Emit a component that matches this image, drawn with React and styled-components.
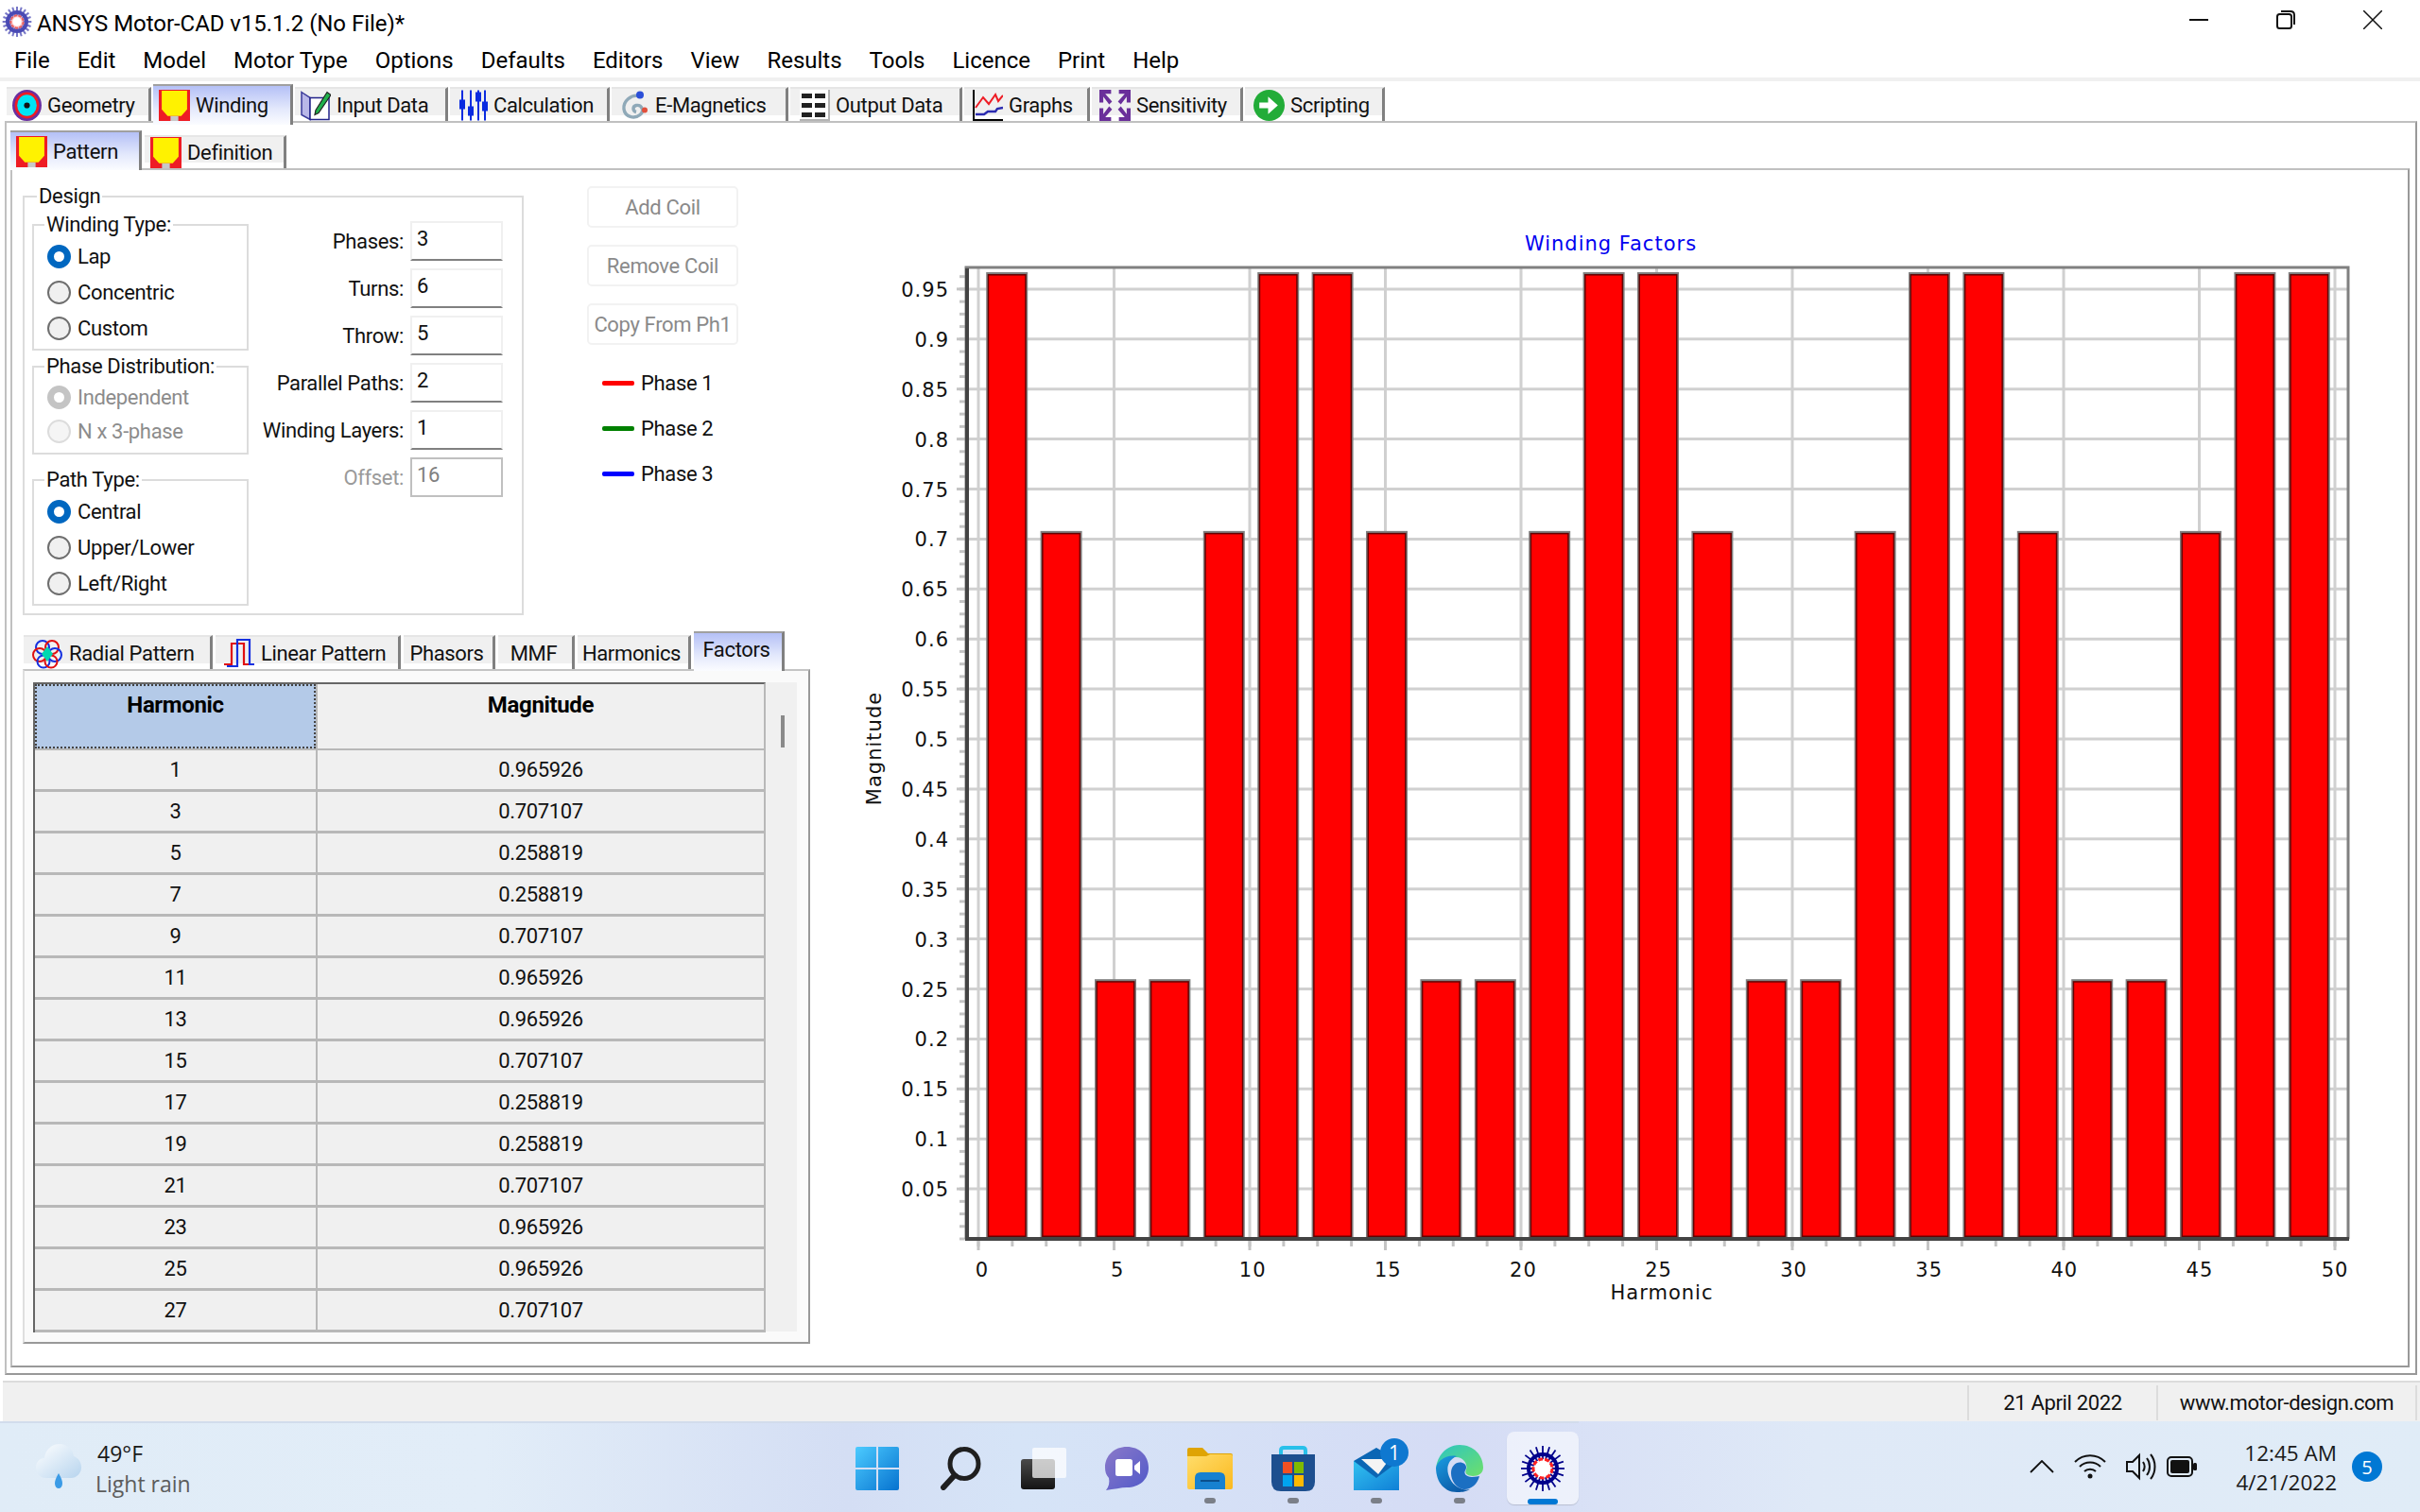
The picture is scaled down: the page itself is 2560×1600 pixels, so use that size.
import React from "react";
import styled, { createGlobalStyle } from "styled-components";

const Global = createGlobalStyle`
  html, body { margin: 0; padding: 0; background: #fff; }
  #root { width: 2560px; height: 1600px; }
  * { box-sizing: border-box; }
`;

const UI = `"Roboto", "Liberation Sans", sans-serif`;
const CHART = `"DejaVu Sans", sans-serif`;

const Root = styled.div`
  width: 2560px; height: 1600px; display: flex; flex-direction: column; overflow: hidden;
  background: #fff; font-family: ${UI}; font-size: 22px; color: #000; letter-spacing: -0.35px;
`;
const TitleBar = styled.div`height: 46px; display: flex; align-items: center; padding-left: 2px; flex: none;`;
const TitleText = styled.div`margin-left: 5px; font-size: 24px; letter-spacing: -0.05px; margin-top: 3px;`;
const WinControls = styled.div`margin-left: auto; display: flex; padding-right: 4px; margin-top: -4px;`;
const WinButton = styled.div`width: 92px; height: 40px; display: flex; align-items: center; justify-content: center;`;
const MenuBar = styled.div`height: 36px; display: flex; gap: 29px; padding-left: 15px; align-items: center; flex: none; font-size: 24px; letter-spacing: 0;`;
const MenuItem = styled.div`line-height: 36px;`;
const Strip = styled.div`height: 4px; background: #f0f0f0; flex: none;`;

const MainTabs = styled.div`
  height: 42px; display: flex; align-items: flex-end; padding-left: 7px; gap: 2px; flex: none; position: relative; z-index: 2;
`;
const Tab = styled.div`
  display: flex; align-items: center; gap: ${p => p.$gap ?? 6}px; width: ${p => p.$w}px; flex: none;
  height: ${p => p.$active ? p.$ah : p.$h}px;
  margin-bottom: ${p => p.$active ? -(p.$over ?? 4) : 0}px;
  padding-left: ${p => p.$pl ?? 6}px;
  padding-bottom: ${p => p.$active && p.$center ? 6 : 0}px;
  justify-content: ${p => p.$center ? "center" : "flex-start"};
  padding-right: ${p => p.$center ? 3 : 0}px;
  background: ${p => p.$active ? "linear-gradient(180deg,#b4c0f6 0%,#e4e9fc 60%,#fbfcff 100%)" : "linear-gradient(180deg,#f0f0f0 0%,#f0f0f0 82%,#fff 83%)"};
  border-right: 3px solid #808080;
  border-top: 2px solid ${p => p.$active ? "#a0a0a0" : "#e6e6e6"};
  color: #111;
  white-space: nowrap;
`;
const Frame = styled.div`
  flex: 1; margin: 0 3px 6px 5px; min-height: 0; display: flex; flex-direction: column;
  border: 2px solid #c0c0c0; border-right-color: #999; border-bottom-color: #999;
  padding: 6px 6px 6px 4px;
`;
const SubTabs = styled.div`height: 42px; display: flex; align-items: flex-end; gap: 3px; flex: none; position: relative; z-index: 2;`;
const SubFrame = styled.div`
  flex: 1; display: flex; min-height: 0;
  border: 2px solid #c0c0c0; border-right-color: #999; border-bottom-color: #999;
`;
const LeftColumn = styled.div`width: 867px; flex: none; padding: 17px 0 0 11px; display: flex; flex-direction: column;`;
const UpperRow = styled.div`display: flex; height: 456px; flex: none;`;
const Design = styled.fieldset`
  margin: 10px 0 0 0; padding: 28px 20px 0 8px; width: 530px; height: 444px; min-width: 0; flex: none;
  border: 2px solid #dcdcdc; display: flex; gap: 0;
`;
const Legend = styled.legend`
  height: 2px; line-height: 2px; padding: 0 2px; margin-left: ${p => p.$ml ?? -3}px; white-space: nowrap; color: #111;
`;
const DesignLeft = styled.div`width: 229px; flex: none; display: flex; flex-direction: column;`;
const Group = styled.fieldset`
  margin: ${p => p.$mt ?? 0}px 0 0 0; padding: 13px 0 0 14px; width: 229px; height: ${p => p.$h}px; min-width: 0;
  border: 2px solid #dcdcdc;
`;
const RadioRow = styled.div`
  height: ${p => p.$h}px; display: flex; align-items: center; gap: 7px;
  color: ${p => p.$disabled ? "#8c8c8c" : "#111"};
`;
const RadioDot = styled.span`
  width: 25px; height: 25px; border-radius: 50%; flex: none;
  background: ${p => p.$on ? "#fff" : p.$disabled ? "#f5f5f5" : "#f0f0f0"};
  border: ${p => p.$on ? "7px" : "2px"} solid ${p => p.$on ? (p.$disabled ? "#c4c4c4" : "#0067c0") : p.$disabled ? "#dcdcdc" : "#6e6e6e"};
`;
const FieldColumn = styled.div`flex: 1; display: flex; flex-direction: column; gap: 8px; margin-top: -3px;`;
const FieldRow = styled.div`display: flex; justify-content: flex-end; align-items: center; gap: 7px; height: 42px;`;
const FieldLabel = styled.span`color: ${p => p.$disabled ? "#9a9a9a" : "#111"}; white-space: nowrap; padding-top: 1px;`;
const FieldBox = styled.div`
  width: 98px; height: 42px; padding: 0 0 0 5px; line-height: 34px; flex: none;
  border: 2px solid ${p => p.$disabled ? "#c0c0c0" : "#f0f0f0"};
  border-bottom-color: ${p => p.$disabled ? "#c0c0c0" : "#808080"};
  color: ${p => p.$disabled ? "#808080" : "#111"};
`;
const ActionColumn = styled.div`margin-left: 67px; width: 160px; display: flex; flex-direction: column; gap: 18px;`;
const ActionButton = styled.div`
  height: 44px; border: 2px solid #f2f2f2; border-radius: 5px; display: flex; align-items: center; justify-content: center;
  color: #8a8a8a; white-space: nowrap;
`;
const PhaseList = styled.div`margin-top: -2px; padding-left: 16px; display: flex; flex-direction: column;`;
const PhaseRow = styled.div`height: 48px; display: flex; align-items: center; gap: 7px; color: #111;`;
const PhaseLine = styled.span`width: 34px; height: 5px; border-radius: 2px; background: ${p => p.$c};`;

const LowerTabs = styled.div`height: 41px; margin: 14px 0 0 1px; gap: 3px; flex: none; display: flex; align-items: flex-end; position: relative; z-index: 2;`;
const LowerPanel = styled.div`
  width: 833px; height: 714px; flex: none; padding: 12px 12px 0 9px; display: flex; align-items: flex-start; background: #fafafa;
  border: 2px solid #dfdfdf; border-right-color: #999; border-bottom-color: #999; border-top-color: #c4c4c4;
`;
const GridTable = styled.div`
  width: 775px; flex: none; border-top: 2px solid #666; border-left: 2px solid #666; border-right: 2px solid #b8b8b8; background: #f0f0f0;
`;
const GridRow = styled.div`
  display: grid; grid-template-columns: 297px 474px; height: ${p => p.$h ?? 44}px; border-bottom: 3px solid #b8b8b8;
`;
const Cell = styled.div`
  display: flex; align-items: center; justify-content: center; border-left: ${p => p.$first ? "0" : "2px solid #b8b8b8"}; color: #111;
`;
const HeadCell = styled.div`
  padding-top: ${p => p.$sel ? 6 : 8}px; text-align: center; font-weight: 700; line-height: 28px; font-size: 24px;
  background: ${p => p.$sel ? "#b4cae8" : "#f0f0f0"};
  border: ${p => p.$sel ? "2px dotted #444" : "0"};
  border-left: ${p => p.$sel ? "2px dotted #444" : "2px solid #b8b8b8"};
  margin-bottom: -1px;
`;
const ScrollTrack = styled.div`width: 33px; height: 687px; flex: none; background: #f0f0f0; padding: 35px 0 0 16px;`;
const ScrollThumb = styled.div`width: 4px; height: 34px; background: #8a8a8a;`;

const ChartBox = styled.div`flex: 1; padding-top: 20px; min-width: 0;`;

const StatusBar = styled.div`
  height: 43px; flex: none; background: #f0f0f0; border-top: 2px solid #dcdcdc; display: flex; justify-content: flex-end; padding: 3px 3px 1px 0; margin-left: 3px;
`;
const StatusCell = styled.div`
  width: ${p => p.$w}px; flex: none; border-left: 2px solid #dcdcdc; display: flex; align-items: center; justify-content: center; color: #111;
  &:last-child { border-right: 2px solid #dcdcdc; }
`;

const Taskbar = styled.div`
  height: 96px; flex: none; display: grid; grid-template-columns: 1fr auto 1fr; align-items: stretch;
  background: linear-gradient(90deg,#e0ecf7 0%,#e2edf8 20%,#d4def4 35%,#d6e4f7 42%,#d5dcf5 60%,#dfe9f7 75%,#e0ecf7 100%);
  font-family: "Open Sans","Noto Sans",sans-serif; letter-spacing: 0;
`;
const Weather = styled.div`display: flex; align-items: center; padding-left: 38px; gap: 15px; border-top: 2px solid #d2dcec;`;
const WeatherText = styled.div`display: flex; flex-direction: column; margin-top: 2px;`;
const WeatherTemp = styled.div`font-size: 23px; line-height: 32px; color: #1a1a1a; padding-left: 2px;`;
const WeatherDesc = styled.div`font-size: 23px; line-height: 33px; color: #5c5c5c;`;
const TaskIcons = styled.div`display: flex; gap: 12px; padding-top: 9px; border-top: 2px solid #d2dcec;`;
const TaskButton = styled.div`
  width: 76px; height: 77px; border-radius: 8px; position: relative; display: flex; align-items: center; justify-content: center;
  background: ${p => p.$active ? "rgba(255,255,255,.55)" : "transparent"};
  box-shadow: ${p => p.$active ? "0 1px 1px rgba(0,0,0,.15)" : "none"};
`;
const MailHolder = styled.div`display: flex; margin: -7px 0 0 10px;`;
const RunDot = styled.span`
  position: absolute; bottom: ${p => p.$active ? 0 : 1}px; left: 50%; transform: translateX(-50%);
  width: ${p => p.$active ? 32 : 12}px; height: 6px; border-radius: 3px; background: ${p => p.$active ? "#0078d4" : "#7b7f88"};
`;
const Tray = styled.div`display: flex; align-items: center; justify-content: flex-end; padding-right: 40px; gap: 0;`;
const TrayIcon = styled.div`width: ${p => p.$w}px; display: flex; justify-content: center; flex: none;`;
const Clock = styled.div`margin-left: 30px; text-align: right; font-size: 22.5px; line-height: 31px; color: #1a1a1a; margin-top: 2px;`;
const Badge = styled.div`
  width: 32px; height: 32px; border-radius: 50%; background: #0078d4; color: #fff; margin-left: 16px; font-size: 20px;
  display: flex; align-items: center; justify-content: center;
`;

/* ---------- icons ---------- */
const MotorIcon = ({ w = 32, h = 32, soft }) => {
  const spokes = Array.from({ length: 20 }, (_, i) => i * 18);
  const ink = soft ? "#4a4ab4" : "#00008b";
  return (
    <svg width={w} height={h} viewBox="0 0 48 50">
      {spokes.map(a => (
        <line key={a} x1="24" y1="25" x2={24 + 23 * Math.cos(a * Math.PI / 180)} y2={25 + 24 * Math.sin(a * Math.PI / 180)} stroke={ink} strokeWidth={soft ? 3 : 1.8} strokeOpacity={soft ? 0.75 : 1} />
      ))}
      <circle cx="24" cy="25" r="15" fill="none" stroke={ink} strokeWidth={soft ? 6 : 4} />
      <circle cx="24" cy="25" r="10" fill={soft ? "#ffc8c8" : "#fff"} stroke={soft ? "#e86060" : "#ff2020"} strokeWidth="3" strokeDasharray="5 2" />
      <circle cx="24" cy="25" r="7" fill="#fff" />
    </svg>
  );
};
const CoilIcon = () => (
  <svg width="33" height="33" viewBox="0 0 32 32">
    <rect width="32" height="32" fill="#ee1c25" />
    <path d="M3 1H29V20L23 27H9L3 20Z" fill="#fff200" />
    <rect x="12" y="27" width="8" height="5" fill="#c8c8c8" />
  </svg>
);
const GeometryIcon = () => (
  <svg width="31" height="33" viewBox="0 0 30 32">
    <ellipse cx="15" cy="16" rx="15" ry="16" fill="#6a2fa0" />
    <ellipse cx="15" cy="16" rx="12.5" ry="13.5" fill="#ee1c25" />
    <ellipse cx="15" cy="16" rx="10" ry="11" fill="#00e5f5" />
    <ellipse cx="15" cy="16" rx="3" ry="3" fill="#111" />
  </svg>
);
const InputIcon = () => (
  <svg width="32" height="33" viewBox="0 0 32 32">
    <path d="M1 2L10 8V31L1 26Z" fill="#b9b7e8" stroke="#3a3a9a" strokeWidth="1.5" />
    <path d="M10 8H30V31H10Z" fill="#fff" stroke="#23238a" strokeWidth="1.5" />
    <path d="M16 21L28 2L32 5L19 24L15 26Z" fill="#21b14c" stroke="#222" strokeWidth="1.2" />
  </svg>
);
const CalcIcon = () => (
  <svg width="30" height="33" viewBox="0 0 30 32" stroke="#0a2be0" strokeWidth="2">
    <line x1="3" y1="0" x2="3" y2="32" /><line x1="12" y1="0" x2="12" y2="32" /><line x1="20" y1="0" x2="20" y2="32" /><line x1="27" y1="0" x2="27" y2="32" />
    <rect x="1" y="11" width="4" height="8" fill="#0a2be0" /><rect x="10" y="18" width="4" height="8" fill="#0a2be0" /><rect x="18" y="3" width="4" height="8" fill="#0a2be0" /><rect x="25" y="13" width="4" height="8" fill="#0a2be0" />
  </svg>
);
const MagneticsIcon = () => (
  <svg width="30" height="33" viewBox="0 0 30 32">
    <path d="M20 6C10 4 2 12 3 20C4 28 14 31 20 26C25 22 22 15 16 16C12 17 12 22 16 23" fill="none" stroke="#8fa9b8" strokeWidth="3.4" />
    <circle cx="20" cy="5" r="4" fill="#2b4fd8" /><circle cx="25" cy="21" r="3" fill="#e2503c" />
  </svg>
);
const OutputIcon = () => (
  <svg width="32" height="33" viewBox="0 0 32 33">
    <rect width="32" height="33" fill="#fff" /><path d="M30 0V31H0V33H32V0Z" fill="#b4b4b4" />
    {[4, 14, 24].map(y => (<g key={y}><rect x="2" y={y} width="11" height="5" fill="#222" /><rect x="16" y={y} width="11" height="5" fill="#222" /></g>))}
  </svg>
);
const GraphsIcon = () => (
  <svg width="32" height="33" viewBox="0 0 32 33" fill="none">
    <path d="M1 0V32H32" stroke="#000" strokeWidth="2" />
    <path d="M3 19L11 8L17 15L24 5L27 12L32 6" stroke="#ee1c25" strokeWidth="2" />
    <path d="M3 26H12L16 23H24L26 20L32 19" stroke="#2b2bb0" strokeWidth="2.4" />
  </svg>
);
const SensitivityIcon = () => (
  <svg width="33" height="33" viewBox="0 0 32 32" fill="#6a2f9a">
    <path d="M0 0H12V4H6L13 12L10 15L4 7V13H0Z" /><path d="M32 0H20V4H26L19 12L22 15L28 7V13H32Z" />
    <path d="M0 32H12V28H6L13 20L10 17L4 25V19H0Z" /><path d="M32 32H20V28H26L19 20L22 17L28 25V19H32Z" />
  </svg>
);
const ScriptIcon = () => (
  <svg width="33" height="33" viewBox="0 0 32 32">
    <circle cx="16" cy="16" r="16" fill="#22ac38" />
    <path d="M6 13H15V7L25 16L15 25V19H6Z" fill="#fff" />
  </svg>
);
const RadialIcon = () => (
  <svg width="32" height="33" viewBox="0 0 32 33" fill="none" strokeWidth="2">
    <circle cx="11" cy="10" r="7" stroke="#1530e0" /><circle cx="21" cy="10" r="7" stroke="#e01010" />
    <circle cx="8" cy="18" r="7" stroke="#e01010" /><circle cx="24" cy="18" r="7" stroke="#1530e0" />
    <circle cx="12" cy="25" r="6.5" stroke="#1530e0" /><circle cx="20" cy="25" r="6.5" stroke="#e01010" />
    <path d="M16 9L22 17L16 25L10 17Z" fill="#00d8b0" />
  </svg>
);
const LinearIcon = () => (
  <svg width="32" height="30" viewBox="0 0 32 30" fill="none" strokeWidth="2.2">
    <path d="M0 27H8V5H21V27H32" stroke="#e01010" /><path d="M3 29H14V1H27V27H32" stroke="#1530e0" />
  </svg>
);
const StartIcon = () => (
  <svg width="46" height="46" viewBox="0 0 46 46">
    <defs><linearGradient id="st" x1="0" y1="0" x2="1" y2="1"><stop offset="0" stopColor="#4ccbff" /><stop offset="1" stopColor="#0672cf" /></linearGradient></defs>
    <path d="M2 0H22V22H0V2Q0 0 2 0ZM24 0H44Q46 0 46 2V22H24ZM0 24H22V46H2Q0 46 0 44ZM24 24H46V44Q46 46 44 46H24Z" fill="url(#st)" />
  </svg>
);
const SearchIcon = () => (
  <svg width="44" height="46" viewBox="0 0 44 46" fill="none" stroke="#1f1f1f" strokeLinecap="round">
    <ellipse cx="26" cy="18" rx="15" ry="15.5" strokeWidth="5" /><path d="M15 31L4 43" strokeWidth="6" />
  </svg>
);
const TaskViewIcon = () => (
  <svg width="48" height="44" viewBox="0 0 48 44">
    <defs><linearGradient id="tv" x1="0" y1="0" x2="0" y2="1"><stop offset="0" stopColor="#4a4a4a" /><stop offset="1" stopColor="#141414" /></linearGradient></defs>
    <rect x="0" y="12" width="36" height="32" rx="3" fill="url(#tv)" />
    <rect x="12" y="0" width="36" height="32" rx="2" fill="#fff" fillOpacity=".72" />
  </svg>
);
const ChatIcon = () => (
  <svg width="46" height="46" viewBox="0 0 46 46">
    <defs><linearGradient id="ch" x1="0" y1="0" x2="1" y2="1"><stop offset="0" stopColor="#8b79c9" /><stop offset="1" stopColor="#5059c9" /></linearGradient></defs>
    <path d="M23 0C36 0 46 9 46 22C46 35 36 43 23 43C17 43 9 45 1 46C4 42 5 38 4 33C1 30 0 26 0 22C0 9 10 0 23 0Z" fill="url(#ch)" />
    <rect x="11" y="13" width="18" height="18" rx="2.5" fill="#fff" /><path d="M31 20L37 15V29L31 24Z" fill="#fff" />
  </svg>
);
const FolderIcon = () => (
  <svg width="48" height="44" viewBox="0 0 48 44">
    <defs><linearGradient id="fo" x1="0" y1="0" x2="1" y2="1"><stop offset="0" stopColor="#ffdd6b" /><stop offset="1" stopColor="#fbb91f" /></linearGradient></defs>
    <path d="M0 2Q0 0 2 0H16L22 6H46Q48 6 48 8V20H0Z" fill="#dfa404" />
    <path d="M0 9H20L24 7H46Q48 7 48 9V42Q48 44 46 44H2Q0 44 0 42Z" fill="url(#fo)" />
    <path d="M8 44V32Q8 26 14 26H34Q40 26 40 32V44Z" fill="#1781d0" /><rect x="14" y="34" width="20" height="2" fill="#0a4f8c" />
  </svg>
);
const StoreIcon = () => (
  <svg width="46" height="48" viewBox="0 0 46 48">
    <path d="M10 12V5Q10 2 13 2H33Q36 2 36 5V12" fill="none" stroke="#29c0ea" strokeWidth="4" />
    <path d="M0 9H46V38Q46 48 36 48H10Q0 48 0 38Z" fill="#1d4f8f" />
    <rect x="12" y="17" width="10" height="12" fill="#f25022" /><rect x="24" y="17" width="10" height="12" fill="#7fba00" />
    <rect x="12" y="31" width="10" height="12" fill="#00a4ef" /><rect x="24" y="31" width="10" height="12" fill="#ffb900" />
  </svg>
);
const MailIcon = () => (
  <svg width="58" height="56" viewBox="0 0 58 56">
    <defs><linearGradient id="ma" x1="0" y1="0" x2="1" y2="1"><stop offset="0" stopColor="#33c1f0" /><stop offset="1" stopColor="#0f7fd6" /></linearGradient></defs>
    <path d="M0 24L24 10L48 24V55H0Z" fill="#0b66b4" />
    <path d="M8 22H38L26 38Z" fill="#f4f4f4" />
    <path d="M0 24L24 42L48 24V55H0Z" fill="url(#ma)" />
    <circle cx="43" cy="15" r="15" fill="#0f78d0" />
    <text x="43" y="23" fontSize="21" fill="#fff" textAnchor="middle" fontFamily="Open Sans, sans-serif">1</text>
  </svg>
);
const EdgeIcon = () => (
  <svg width="50" height="50" viewBox="0 0 50 50">
    <defs>
      <linearGradient id="e1" x1="0" y1="0" x2="1" y2="1"><stop offset="0" stopColor="#2bc4c4" /><stop offset="1" stopColor="#6ee06a" /></linearGradient>
      <linearGradient id="e2" x1="0" y1="0" x2="0.6" y2="1"><stop offset="0" stopColor="#1b9de2" /><stop offset="1" stopColor="#0c5ba8" /></linearGradient>
    </defs>
    <path d="M25 0C40 0 50 11 50 24C50 30 45 33 39 33C33 33 30 30 32 26C34 22 30 12 20 13C10 14 2 20 0 24C2 10 12 0 25 0Z" fill="url(#e1)" />
    <path d="M0 24C2 16 12 10 22 12C12 16 10 26 15 36C19 44 28 49 36 47C31 50 26 50 22 50C8 50 0 38 0 24Z" fill="url(#e2)" />
    <path d="M16 30C16 22 22 17 28 19C32 20 33 24 31 27C29 30 32 34 38 34C42 34 45 33 46 33C44 42 36 48 29 47C22 46 16 38 16 30Z" fill="#1b6fc2" />
  </svg>
);
const CloudIcon = () => (
  <svg width="48" height="54" viewBox="0 0 48 54">
    <defs><linearGradient id="cl" x1="0" y1="0" x2="1" y2="1"><stop offset="0" stopColor="#fff" /><stop offset="1" stopColor="#b7d4ee" /></linearGradient></defs>
    <path d="M11 38C4 38 0 33 0 27C0 21 4 17 9 17C10 8 17 2 25 2C33 2 39 8 40 15C45 17 48 21 48 27C48 33 43 38 37 38Z" fill="url(#cl)" />
    <path d="M24 33C27 38 28 41 28 44C28 47 26 49 24 49C22 49 20 47 20 44C20 41 21 38 24 33Z" fill="#3b9be6" />
  </svg>
);

const RestoreIcon = () => (
  <svg width="20" height="20" viewBox="0 0 20 20" fill="none" stroke="#111" strokeWidth="2">
    <rect x="1" y="4" width="15" height="15" rx="2.5" /><path d="M5 1H15Q19 1 19 5V15" />
  </svg>
);

/* ---------- chart ---------- */
const X0 = 1035, XS = 28.7, Y0 = 1311, YS = 1058, PL = 1023, PT = 284, PR = 2484;
const px = v => X0 + v * XS;
const py = v => Y0 - v * YS;
const chartFont = { fontFamily: CHART, fontSize: 21, letterSpacing: 1, fill: "#111" };
const factors = [0.965926, 0.707107, 0.258819, 0.258819, 0.707107, 0.965926];
const bars = Array.from({ length: 25 }, (_, i) => ({ h: 2 * i + 1, v: factors[i % 6] }));
const yMajor = Array.from({ length: 19 }, (_, i) => (i + 1) * 0.05);
const xMajor = Array.from({ length: 11 }, (_, i) => i * 5);
const yMinor = Array.from({ length: 80 }, (_, i) => i * 0.0125).filter(v => py(v) > PT + 4);
const xMinor = Array.from({ length: 41 }, (_, i) => i * 1.25);
const fmt = v => String(Number(v.toFixed(2)));

const Chart = () => (
  <svg width="1660" height="1220" viewBox="880 200 1660 1220" style={{ display: "block" }}>
    <text x="1704" y="265" textAnchor="middle" {...chartFont} fill="#0000f0">Winding Factors</text>
    {xMajor.map(v => <line key={v} x1={px(v)} x2={px(v)} y1={PT} y2={Y0} stroke="#d0d0d0" strokeWidth="3" />)}
    {yMajor.map(v => <line key={v} x1={PL} x2={PR} y1={py(v)} y2={py(v)} stroke="#d0d0d0" strokeWidth="3" />)}
    {yMinor.map(v => <line key={v} x1="1015" x2={PL} y1={py(v)} y2={py(v)} stroke="#c4c4c4" strokeWidth="3" />)}
    {yMajor.map(v => <line key={v} x1="1012" x2={PL} y1={py(v)} y2={py(v)} stroke="#c4c4c4" strokeWidth="3" />)}
    {xMinor.map(v => <line key={v} x1={px(v)} x2={px(v)} y1={Y0} y2="1319" stroke="#c4c4c4" strokeWidth="3" />)}
    {xMajor.map(v => <line key={v} x1={px(v)} x2={px(v)} y1={Y0} y2="1323" stroke="#c4c4c4" strokeWidth="3" />)}
    {bars.map(b => {
      const c = px(b.h) + 1.5;
      return (
        <g key={b.h}>
          <rect x={c - 22} y={py(b.v) - 1} width="44" height={Y0 - py(b.v) + 1} fill="#808080" />
          <rect x={c - 20.5} y={py(b.v) + 1} width="41" height={Y0 - py(b.v)} fill="#660000" />
          <rect x={c - 19} y={py(b.v) + 2.5} width="38" height={Y0 - py(b.v) - 6} fill="#ff0000" />
        </g>
      );
    })}
    <path d={`M${PL - 1} ${Y0}V${PT - 1}H${PR}V${Y0}`} fill="none" stroke="#808080" strokeWidth="3" />
    <line x1="1023" x2="1023" y1="284" y2="1313" stroke="#444" strokeWidth="4" />
    <line x1="1021" x2={PR + 1} y1="1311" y2="1311" stroke="#444" strokeWidth="4" />
    {yMajor.map(v => <text key={v} x="1004" y={py(v) + 8} textAnchor="end" {...chartFont}>{fmt(v)}</text>)}
    {xMajor.map(v => <text key={v} x={1039 + v * 28.62} y="1351" textAnchor="middle" {...chartFont}>{v}</text>)}
    <text x="1758" y="1375" textAnchor="middle" {...chartFont}>Harmonic</text>
    <text transform="translate(932 792) rotate(-90)" textAnchor="middle" {...chartFont}>Magnitude</text>
  </svg>
);

/* ---------- data ---------- */
const menus = ["File", "Edit", "Model", "Motor Type", "Options", "Defaults", "Editors", "View", "Results", "Tools", "Licence", "Print", "Help"];
const mainTabs = [
  { t: "Geometry", w: 153, I: GeometryIcon, pl: 6 },
  { t: "Winding", w: 148, I: CoilIcon, active: true, pl: 6 },
  { t: "Input Data", w: 162, I: InputIcon, pl: 6 },
  { t: "Calculation", w: 169, I: CalcIcon, pl: 10 },
  { t: "E-Magnetics", w: 187, I: MagneticsIcon, pl: 10 },
  { t: "Output Data", w: 182, I: OutputIcon, pl: 10 },
  { t: "Graphs", w: 133, I: GraphsIcon, pl: 9 },
  { t: "Sensitivity", w: 160, I: SensitivityIcon, pl: 8 },
  { t: "Scripting", w: 148, I: ScriptIcon, pl: 9 },
];
const lowerTabs = [
  { t: "Radial Pattern", w: 200, I: RadialIcon },
  { t: "Linear Pattern", w: 196, I: LinearIcon },
  { t: "Phasors", w: 97, c: true },
  { t: "MMF", w: 81, c: true },
  { t: "Harmonics", w: 120, c: true },
  { t: "Factors", w: 96, c: true, active: true },
];
const rows = Array.from({ length: 14 }, (_, i) => ({ h: 2 * i + 1, v: factors[i % 6].toFixed(6) }));
const fields = [["Phases:", "3"], ["Turns:", "6"], ["Throw:", "5"], ["Parallel Paths:", "2"], ["Winding Layers:", "1"], ["Offset:", "16", true]];

const Radio = ({ h, on, disabled, children }) => (
  <RadioRow $h={h} $disabled={disabled}>
    <RadioDot $on={on} $disabled={disabled} />{children}
  </RadioRow>
);

export default function App() {
  return (
    <Root>
      <Global />
      <TitleBar>
        <MotorIcon w={32} h={36} soft />
        <TitleText>ANSYS Motor-CAD v15.1.2 (No File)*</TitleText>
        <WinControls>
          <WinButton><svg width="20" height="20" viewBox="0 0 20 20"><rect y="9" width="20" height="2" fill="#111" /></svg></WinButton>
          <WinButton><RestoreIcon /></WinButton>
          <WinButton><svg width="20" height="20" viewBox="0 0 20 20" stroke="#111" strokeWidth="1.5"><path d="M0 0L20 20M20 0L0 20" /></svg></WinButton>
        </WinControls>
      </TitleBar>
      <MenuBar>{menus.map(m => <MenuItem key={m}>{m}</MenuItem>)}</MenuBar>
      <Strip />
      <MainTabs>
        {mainTabs.map(({ t, w, I, active, pl }) => (
          <Tab key={t} $w={w} $h={36} $ah={43} $active={active} $pl={pl}><I />{t}</Tab>
        ))}
      </MainTabs>
      <Frame>
        <SubTabs>
          <Tab $w={139} $h={35} $ah={42} $over={2} $active><CoilIcon />Pattern</Tab>
          <Tab $w={150} $h={35} $ah={42}><CoilIcon />Definition</Tab>
        </SubTabs>
        <SubFrame>
          <LeftColumn>
            <UpperRow>
              <Design>
                <Legend $ml={5}>Design</Legend>
                <DesignLeft>
                  <Group $h={134}>
                    <Legend>Winding Type:</Legend>
                    <Radio h={38} on>Lap</Radio>
                    <Radio h={38}>Concentric</Radio>
                    <Radio h={38}>Custom</Radio>
                  </Group>
                  <Group $h={94} $mt={16}>
                    <Legend>Phase Distribution:</Legend>
                    <Radio h={36} on disabled>Independent</Radio>
                    <Radio h={36} disabled>N x 3-phase</Radio>
                  </Group>
                  <Group $h={134} $mt={26}>
                    <Legend>Path Type:</Legend>
                    <Radio h={38} on>Central</Radio>
                    <Radio h={38}>Upper/Lower</Radio>
                    <Radio h={38}>Left/Right</Radio>
                  </Group>
                </DesignLeft>
                <FieldColumn>
                  {fields.map(([l, v, d]) => (
                    <FieldRow key={l}>
                      <FieldLabel $disabled={d}>{l}</FieldLabel>
                      <FieldBox $disabled={d}>{v}</FieldBox>
                    </FieldRow>
                  ))}
                </FieldColumn>
              </Design>
              <ActionColumn>
                <ActionButton>Add Coil</ActionButton>
                <ActionButton>Remove Coil</ActionButton>
                <ActionButton>Copy From Ph1</ActionButton>
                <PhaseList>
                  <PhaseRow><PhaseLine $c="#ff0000" />Phase 1</PhaseRow>
                  <PhaseRow><PhaseLine $c="#008000" />Phase 2</PhaseRow>
                  <PhaseRow><PhaseLine $c="#0000ff" />Phase 3</PhaseRow>
                </PhaseList>
              </ActionColumn>
            </UpperRow>
            <LowerTabs>
              {lowerTabs.map(({ t, w, I, c, active }) => (
                <Tab key={t} $w={w} $h={36} $ah={42} $over={2} $active={active} $center={c} $gap={7} $pl={c ? 0 : 9}>
                  {I && <I />}{t}
                </Tab>
              ))}
            </LowerTabs>
            <LowerPanel>
              <GridTable>
                <GridRow $h={70}>
                  <HeadCell $sel>Harmonic</HeadCell>
                  <HeadCell>Magnitude</HeadCell>
                </GridRow>
                {rows.map(r => (
                  <GridRow key={r.h}>
                    <Cell $first>{r.h}</Cell>
                    <Cell>{r.v}</Cell>
                  </GridRow>
                ))}
              </GridTable>
              <ScrollTrack><ScrollThumb /></ScrollTrack>
            </LowerPanel>
          </LeftColumn>
          <ChartBox><Chart /></ChartBox>
        </SubFrame>
      </Frame>
      <StatusBar>
        <StatusCell $w={200}>21 April 2022</StatusCell>
        <StatusCell $w={276}>www.motor-design.com</StatusCell>
      </StatusBar>
      <Taskbar>
        <Weather>
          <CloudIcon />
          <WeatherText>
            <WeatherTemp>49°F</WeatherTemp>
            <WeatherDesc>Light rain</WeatherDesc>
          </WeatherText>
        </Weather>
        <TaskIcons>
          <TaskButton><StartIcon /></TaskButton>
          <TaskButton><SearchIcon /></TaskButton>
          <TaskButton><TaskViewIcon /></TaskButton>
          <TaskButton><ChatIcon /></TaskButton>
          <TaskButton><FolderIcon /><RunDot /></TaskButton>
          <TaskButton><StoreIcon /><RunDot /></TaskButton>
          <TaskButton><MailHolder><MailIcon /></MailHolder><RunDot /></TaskButton>
          <TaskButton><EdgeIcon /><RunDot /></TaskButton>
          <TaskButton $active><MotorIcon w={48} h={50} /><RunDot $active /></TaskButton>
        </TaskIcons>
        <Tray>
          <TrayIcon $w={26}><svg width="26" height="14" viewBox="0 0 26 14" fill="none" stroke="#111" strokeWidth="1.8"><path d="M1 13L13 1L25 13" /></svg></TrayIcon>
          <TrayIcon $w={76}>
            <svg width="34" height="28" viewBox="0 0 34 28" fill="none" stroke="#111" strokeWidth="2">
              <path d="M1 9C10 0 24 0 33 9M6 14C12 8 22 8 28 14M11 19C14 16 20 16 23 19" /><circle cx="17" cy="24" r="2.5" fill="#111" stroke="none" />
            </svg>
          </TrayIcon>
          <TrayIcon $w={32}>
            <svg width="32" height="30" viewBox="0 0 32 30" fill="none" stroke="#111" strokeWidth="2">
              <path d="M1 10H7L14 3V27L7 20H1Z" /><path d="M18 10C20 13 20 17 18 20M22 6C26 11 26 19 22 24M26 2C32 9 32 21 26 28" />
            </svg>
          </TrayIcon>
          <TrayIcon $w={54}>
            <svg width="32" height="22" viewBox="0 0 32 22">
              <rect x="1" y="1" width="26" height="20" rx="4" fill="none" stroke="#111" strokeWidth="2" /><rect x="4" y="4" width="20" height="14" rx="2" fill="#111" /><rect x="28" y="7" width="4" height="8" rx="1.5" fill="#111" />
            </svg>
          </TrayIcon>
          <Clock>12:45 AM<br />4/21/2022</Clock>
          <Badge>5</Badge>
        </Tray>
      </Taskbar>
    </Root>
  );
}
